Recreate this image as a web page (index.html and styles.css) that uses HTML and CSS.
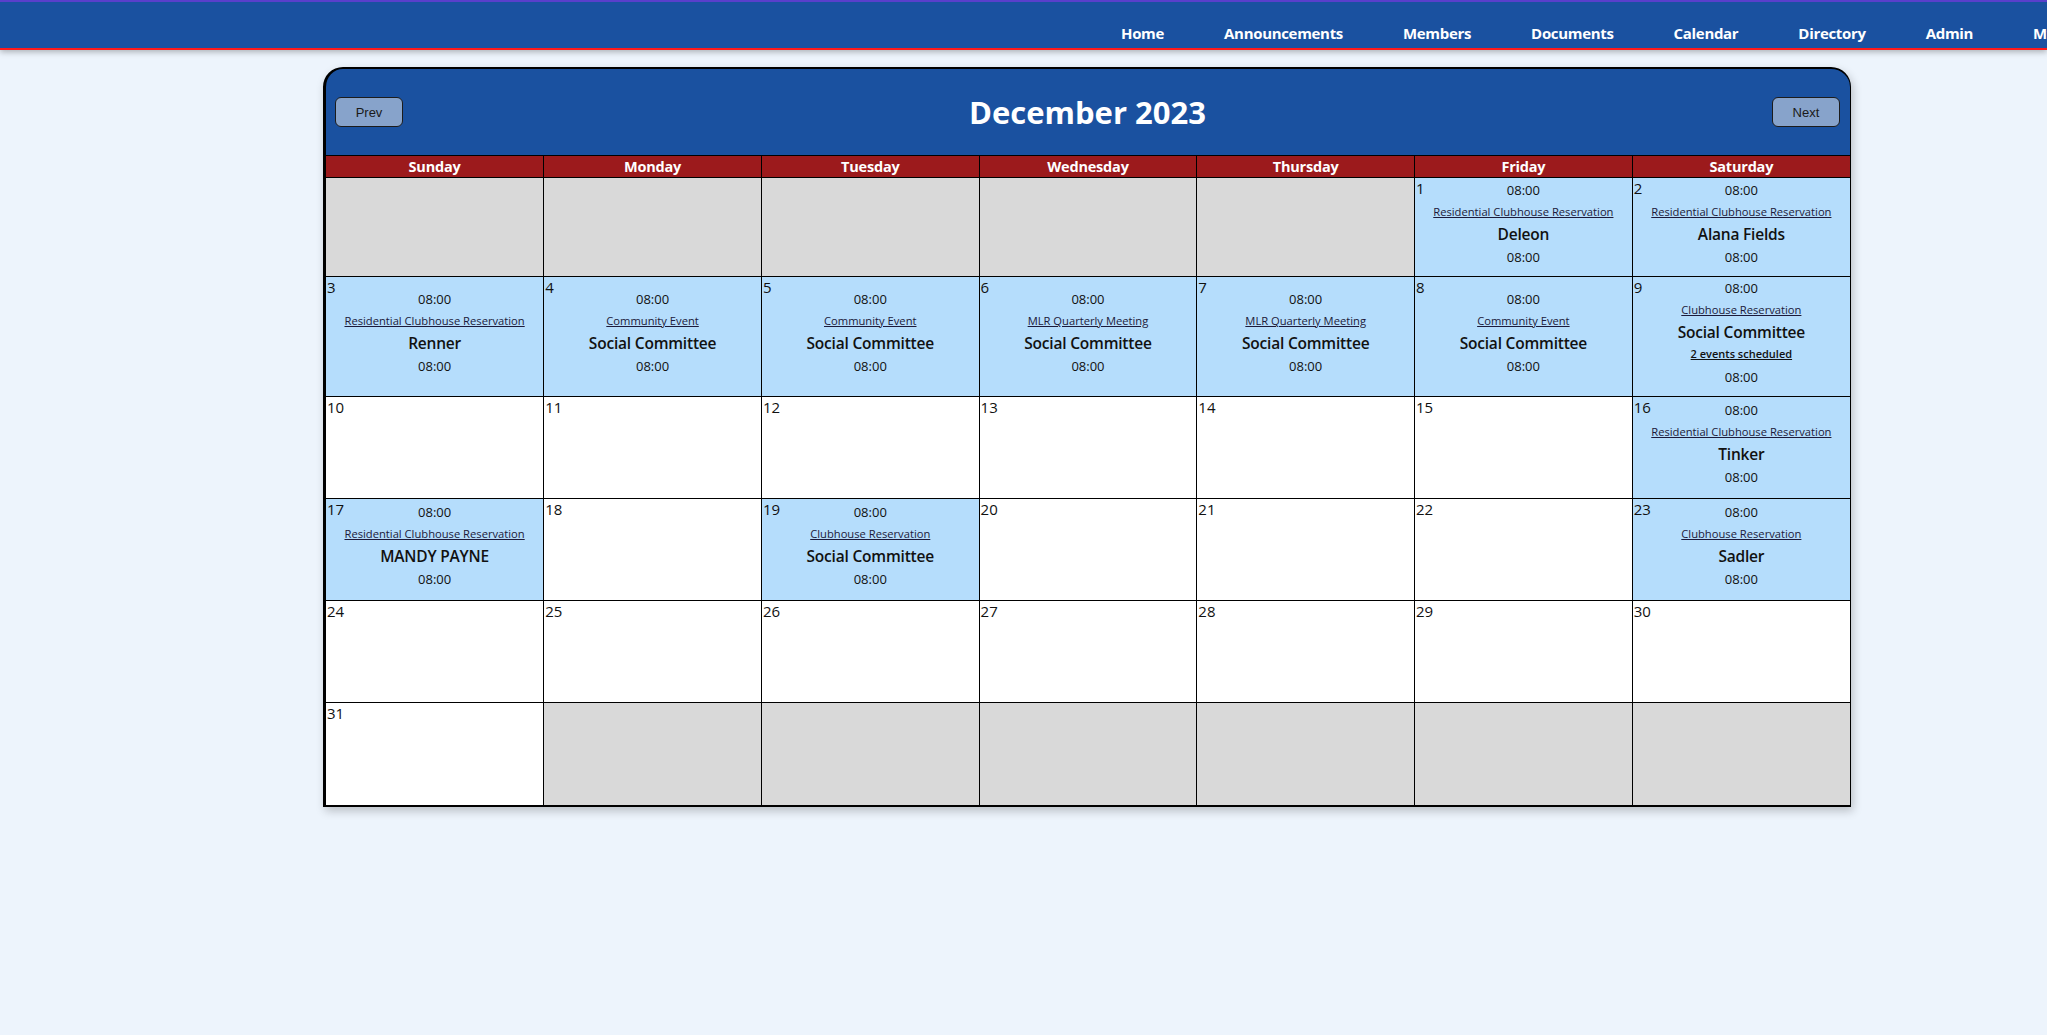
FILE: index.html
```html
<!DOCTYPE html>
<html lang="en">
<head>
<meta charset="utf-8">
<title>Calendar</title>
<link rel="stylesheet" href="styles.css">
</head>
<body>
<header class="topbar">
  <nav class="nav">
    <span class="nav-spacer"></span>
    <a class="nav-link" href="#">Home</a>
    <a class="nav-link" href="#">Announcements</a>
    <a class="nav-link" href="#">Members</a>
    <a class="nav-link" href="#">Documents</a>
    <a class="nav-link" href="#">Calendar</a>
    <a class="nav-link" href="#">Directory</a>
    <a class="nav-link" href="#">Admin</a>
    <a class="nav-link" href="#">My Account</a>
  </nav>
</header>

<main class="page">
  <section class="calendar">
    <div class="cal-head">
      <button class="cal-btn" type="button">Prev</button>
      <h1 class="cal-title">December 2023</h1>
      <button class="cal-btn" type="button">Next</button>
    </div>
    <table class="cal-grid">
      <thead>
        <tr>
          <th>Sunday</th><th>Monday</th><th>Tuesday</th><th>Wednesday</th><th>Thursday</th><th>Friday</th><th>Saturday</th>
        </tr>
      </thead>
      <tbody>
        <tr>
          <td class="off"></td><td class="off"></td><td class="off"></td><td class="off"></td><td class="off"></td>
          <td class="has-ev"><span class="day">1</span>
            <div class="ev"><div class="ev-time">08:00</div><a class="ev-title" href="#">Residential Clubhouse Reservation</a><div class="ev-name">Deleon</div><div class="ev-time end">08:00</div></div>
          </td>
          <td class="has-ev"><span class="day">2</span>
            <div class="ev"><div class="ev-time">08:00</div><a class="ev-title" href="#">Residential Clubhouse Reservation</a><div class="ev-name">Alana Fields</div><div class="ev-time end">08:00</div></div>
          </td>
        </tr>
        <tr>
          <td class="has-ev"><span class="day">3</span>
            <div class="ev"><div class="ev-time">08:00</div><a class="ev-title" href="#">Residential Clubhouse Reservation</a><div class="ev-name">Renner</div><div class="ev-time end">08:00</div></div>
          </td>
          <td class="has-ev"><span class="day">4</span>
            <div class="ev"><div class="ev-time">08:00</div><a class="ev-title" href="#">Community Event</a><div class="ev-name">Social Committee</div><div class="ev-time end">08:00</div></div>
          </td>
          <td class="has-ev"><span class="day">5</span>
            <div class="ev"><div class="ev-time">08:00</div><a class="ev-title" href="#">Community Event</a><div class="ev-name">Social Committee</div><div class="ev-time end">08:00</div></div>
          </td>
          <td class="has-ev"><span class="day">6</span>
            <div class="ev"><div class="ev-time">08:00</div><a class="ev-title" href="#">MLR Quarterly Meeting</a><div class="ev-name">Social Committee</div><div class="ev-time end">08:00</div></div>
          </td>
          <td class="has-ev"><span class="day">7</span>
            <div class="ev"><div class="ev-time">08:00</div><a class="ev-title" href="#">MLR Quarterly Meeting</a><div class="ev-name">Social Committee</div><div class="ev-time end">08:00</div></div>
          </td>
          <td class="has-ev"><span class="day">8</span>
            <div class="ev"><div class="ev-time">08:00</div><a class="ev-title" href="#">Community Event</a><div class="ev-name">Social Committee</div><div class="ev-time end">08:00</div></div>
          </td>
          <td class="has-ev"><span class="day">9</span>
            <div class="ev"><div class="ev-time">08:00</div><a class="ev-title" href="#">Clubhouse Reservation</a><div class="ev-name">Social Committee</div><a class="ev-more" href="#">2 events scheduled</a><div class="ev-time end">08:00</div></div>
          </td>
        </tr>
        <tr>
          <td><span class="day">10</span></td>
          <td><span class="day">11</span></td>
          <td><span class="day">12</span></td>
          <td><span class="day">13</span></td>
          <td><span class="day">14</span></td>
          <td><span class="day">15</span></td>
          <td class="has-ev"><span class="day">16</span>
            <div class="ev"><div class="ev-time">08:00</div><a class="ev-title" href="#">Residential Clubhouse Reservation</a><div class="ev-name">Tinker</div><div class="ev-time end">08:00</div></div>
          </td>
        </tr>
        <tr>
          <td class="has-ev"><span class="day">17</span>
            <div class="ev"><div class="ev-time">08:00</div><a class="ev-title" href="#">Residential Clubhouse Reservation</a><div class="ev-name">MANDY PAYNE</div><div class="ev-time end">08:00</div></div>
          </td>
          <td><span class="day">18</span></td>
          <td class="has-ev"><span class="day">19</span>
            <div class="ev"><div class="ev-time">08:00</div><a class="ev-title" href="#">Clubhouse Reservation</a><div class="ev-name">Social Committee</div><div class="ev-time end">08:00</div></div>
          </td>
          <td><span class="day">20</span></td>
          <td><span class="day">21</span></td>
          <td><span class="day">22</span></td>
          <td class="has-ev"><span class="day">23</span>
            <div class="ev"><div class="ev-time">08:00</div><a class="ev-title" href="#">Clubhouse Reservation</a><div class="ev-name">Sadler</div><div class="ev-time end">08:00</div></div>
          </td>
        </tr>
        <tr>
          <td><span class="day">24</span></td>
          <td><span class="day">25</span></td>
          <td><span class="day">26</span></td>
          <td><span class="day">27</span></td>
          <td><span class="day">28</span></td>
          <td><span class="day">29</span></td>
          <td><span class="day">30</span></td>
        </tr>
        <tr>
          <td><span class="day">31</span></td>
          <td class="off"></td><td class="off"></td><td class="off"></td><td class="off"></td><td class="off"></td><td class="off"></td>
        </tr>
      </tbody>
    </table>
  </section>
</main>
</body>
</html>
```

FILE: styles.css
```css
* { box-sizing: border-box; }

html, body {
  margin: 0;
  padding: 0;
}

body {
  background: #edf4fc;
  font-family: "Open Sans", "Noto Sans", "Liberation Sans", sans-serif;
  color: #111;
  overflow-x: hidden;
}

/* ---------- top navigation ---------- */
.topbar {
  background: #1a51a0;
  border-top: 2px solid #5a3fcb;
  border-bottom: 2px solid #ff1a1a;
  box-shadow: 0 2px 6px rgba(0, 0, 0, 0.28);
  height: 50px;
  overflow: hidden;
}

.nav {
  display: flex;
  align-items: flex-end;
  height: 46px;
  padding-bottom: 5px;
  gap: 60px;
  white-space: nowrap;
}

.nav-spacer {
  flex: 0 0 1061px;
}

.nav-link {
  color: #fff;
  text-decoration: none;
  font-weight: 700;
  font-size: 15px;
  line-height: 20px;
  letter-spacing: -0.32px;
  flex: 0 0 auto;
}

/* ---------- page ---------- */
.page {
  padding: 17px 0 40px 323px;
}

.calendar {
  width: 1528px;
  border: 2px solid #000;
  border-left-width: 3px;
  border-right-width: 1px;
  border-radius: 20px 20px 0 0;
  overflow: hidden;
  background: #1a51a0;
  box-shadow: 2px 4px 10px rgba(0, 0, 0, 0.22);
}

.cal-head {
  display: flex;
  align-items: center;
  justify-content: space-between;
  height: 86px;
  padding: 0 10px 0 9px;
}

.cal-title {
  margin: 0;
  color: #fff;
  font-size: 31px;
  font-weight: 700;
  letter-spacing: 0;
}

.cal-btn {
  width: 68px;
  height: 30px;
  background: #87a3cb;
  border: 1px solid #1c1c1c;
  border-radius: 6px;
  font-family: "Liberation Sans", Arial, sans-serif;
  font-size: 13px;
  color: #1a1a1a;
  padding: 0;
}

/* ---------- grid ---------- */
.cal-grid {
  width: 100%;
  border-collapse: collapse;
  table-layout: fixed;
  background: #fff;
}

.cal-grid th {
  background: #9c1a1c;
  color: #fff;
  font-weight: 700;
  font-size: 14.5px;
  line-height: 20px;
  height: 22px;
  padding: 0;
  border: 1px solid #000;
  letter-spacing: -0.2px;
}

.cal-grid td {
  position: relative;
  height: 102px;
  padding: 0 0 6px;
  border: 1px solid #000;
  background: #fff;
  vertical-align: middle;
  text-align: center;
}

.cal-grid tbody tr:first-child td { height: 99px; }

.cal-grid th:first-child,
.cal-grid td:first-child { border-left: 0; }

.cal-grid th:last-child,
.cal-grid td:last-child { border-right: 0; }

.cal-grid tr:last-child td { border-bottom: 0; }

.cal-grid td.off { background: #d9d9d9; }

.cal-grid td.has-ev { background: #b5ddfc; }

.day {
  position: absolute;
  top: 0;
  left: 1px;
  font-size: 15px;
  line-height: 20px;
  color: #111;
}

.ev {
  display: flex;
  flex-direction: column;
  align-items: center;
  padding-bottom: 2px;
}

.ev-time {
  font-size: 13px;
  line-height: 22px;
  color: #111;
}

.ev-time.end { margin-top: 1px; }

.ev-title {
  font-size: 11.2px;
  line-height: 22px;
  color: #1c1a3a;
  text-decoration: underline;
}

.ev-name {
  font-size: 15.5px;
  font-weight: 600;
  line-height: 22px;
  color: #111;
  letter-spacing: -0.2px;
}

.ev-more {
  font-size: 11px;
  font-weight: 600;
  line-height: 22px;
  color: #111;
  text-decoration: underline;
}
```
